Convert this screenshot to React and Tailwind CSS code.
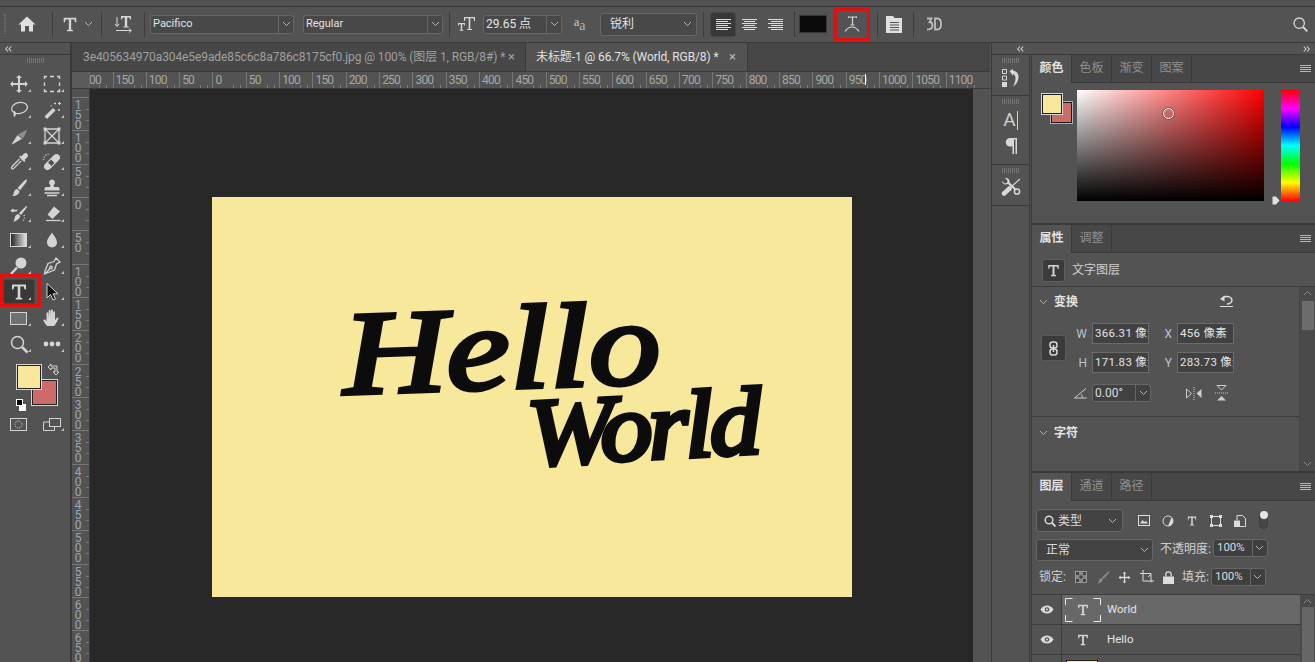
import React from "react";

// Small chevron used by every dropdown in the panels
const Chevron = ({ className = "" }) => (
  <svg width="9" height="6" viewBox="0 0 9 6" className={className}>
    <path d="M1 1l3.500 3.500L8 1" fill="none" stroke="#b4b4b4" strokeWidth="1" />
  </svg>
);

const Burger = () => (
  <svg width="11" height="8" viewBox="0 0 11 8">
    <path d="M0 .5h11M0 2.500h11M0 4.500h11M0 6.500h11" stroke="#b8b8b8" strokeWidth="1" />
  </svg>
);

const Grip = () => (
  <div className="flex h-[5px] justify-center gap-[1px]">
    {Array.from({ length: 9 }).map((_, i) => (
      <span key={i} className="h-[5px] w-[1px] bg-[#757575]" />
    ))}
  </div>
);

const Collapse = ({ flip }) => (
  <svg width="7" height="6" viewBox="0 0 7 6" className={flip ? "rotate-180" : ""}>
    <path d="M3 .5L.7 3 3 5.500M6.300 .5L4 3l2.300 2.500" fill="none" stroke="#d0d0d0" strokeWidth="1.100" />
  </svg>
);

// Slab T, used for the type tool and the layer rows
const SlabT = ({ size = 18, color = "#d4d4d4" }) => (
  <svg width={size} height={size} viewBox="0 0 20 20">
    <path d="M3 2.500h14v5h-1.400l-.8-3h-3.500v11l2 .6v1.400H6.700v-1.400l2-.6v-11H5.200l-.8 3H3z" fill={color} />
  </svg>
);

const I = ({ children, size = 20, vb = 20 }) => (
  <svg width={size} height={size} viewBox={`0 0 ${vb} ${vb}`} fill="none" stroke="#d4d4d4" strokeWidth="1.300">
    {children}
  </svg>
);
const F = { fill: "#d4d4d4", stroke: "none" };

const tools = [
  [
    <I><path {...F} d="M10 1l3 3h-2v5h5V7l3 3-3 3v-2h-5v5h2l-3 3-3-3h2v-5H4v2l-3-3 3-3v2h5V4H7z" /></I>,
    <I><path d="M2.500 5V2.500H5M8 2.500h4M15 2.500h2.500V5M17.500 8.500v3.500M17.500 15v2.500H15M12 17.500H8M5 17.500H2.500V15M2.500 12V8.500" strokeWidth="1.400" /></I>,
  ],
  [
    <I><ellipse cx="10.500" cy="8" rx="8" ry="5.500" transform="rotate(-12 10.500 8)" /><path d="M5.500 13c-.5 1.500-1 3 .8 3.200M4.500 11.500c2 .5 2.500 2.500 1.500 3.500" /></I>,
    <I><path {...F} d="M11 8l2.500 2.500L5 19l-2.500-2.500z" /><path d="M13 2.500v2M12 3.500h2M17.500 2v3M16 3.500h3M17 9v2M16 10h2M9 5v1.500" strokeWidth="1" /></I>,
  ],
  [
    <I><path d="M18.500 3.500l-4.500 9-5-4z" fill="#8f8f8f" stroke="none" /><path {...F} d="M8.500 9l4.500 3.800-8 4.700-2.500 1z" /></I>,
    <I><path d="M3 3h14v14H3zM3 3l14 14M17 3L3 17" /><path {...F} d="M1.500 1.500h3v3h-3zM15.500 1.500h3v3h-3zM1.500 15.500h3v3h-3zM15.500 15.500h3v3h-3z" /></I>,
  ],
  [
    <I><path {...F} d="M15 1.500a2.500 2.500 0 013.500 3.500l-2.800 2.800.8.800-1.400 1.400-5-5 1.400-1.400.8.800z" /><path d="M10.500 7L3.500 14c-1.500 1.500-1.200 2-.8 2.500s1.200.8 2.500-.6l7-7" /></I>,
    <I><path {...F} d="M3 12l9-9c1.500-1.500 3.500-1.500 5 0s1.500 3.500 0 5l-9 9c-1.500 1.500-3.500 1.500-5 0s-1.500-3.500 0-5zM9 7.500L6 10.500l3.500 3.500 3-3z" /><circle cx="9.700" cy="10.200" r="1.100" fill="#4f4f4f" stroke="none" /><path d="M1.500 8a6 6 0 015-6" strokeDasharray="1 1.500" /></I>,
  ],
  [
    <I><path {...F} d="M17.500 1.500c.8.500.3 2-1 3.800L11 12.200 8.500 10l6-6.500c1.300-1.300 2.500-2.300 3-2zM8 11l2.500 2.200c-.3 2.800-3.500 5-7.500 4.800 1.800-1 1.500-2.500 2-4 .4-1.400 1.500-2.800 3-3z" /></I>,
    <I><path {...F} d="M10 1.500a3 3 0 012 5.200c-.5.500-.6 1.300 0 2.300h3.500c1.500 0 2 .8 2 2v1.500h-15V11c0-1.200.5-2 2-2H8c.6-1 .5-1.800 0-2.300a3 3 0 012-5.200z" /><path d="M2.500 15h15M5 17.500h10" /></I>,
  ],
  [
    <I><path {...F} d="M18 2c.4.300-.3 1.800-1.500 3.300L12 11 9.800 9.200l5-5c1.300-1.200 2.700-2.500 3.200-2.200zM9 10l2.300 1.800c-.3 2.800-3.500 5.200-7.300 6.200 1.500-1.500 1.200-3 1.700-4.500.5-1.500 1.800-3.200 3.300-3.500z" /><path {...F} d="M1 6.500l3.500-2v1.300h4.500l-1.500 1.700h-3v1.300z" /><path d="M15 11c1 2 .5 4-1 6" strokeDasharray="1 1.500" /></I>,
    <I><path {...F} d="M12 2.500l6 5-7.500 7.500-5-4.500z" /><path d="M4 16.500h14.500" /></I>,
  ],
  [
    <svg width="17" height="14" viewBox="0 0 17 14"><rect x=".5" y=".5" width="16" height="13" fill="url(#g1)" stroke="#d4d4d4" /><defs><linearGradient id="g1"><stop offset="0" stopColor="#222" /><stop offset="1" stopColor="#e8e8e8" /></linearGradient></defs></svg>,
    <I><path {...F} d="M10 2.500c2.500 4 5 6.500 5 10a5 5 0 01-10 0c0-3.500 2.500-6 5-10z" /></I>,
  ],
  [
    <I><circle {...F} cx="12" cy="7" r="5.500" /><path d="M8 11.500l-6 6.500" strokeWidth="2.400" /></I>,
    <I><path d="M14 2l4 4-3.500 2-2 6L5 17l-2.500 1L3 15l3-7.500 6-2zM3 18l5.500-6" /><circle cx="9" cy="11.500" r="1.300" /></I>,
  ],
  [
    "T",
    <svg width="14" height="20" viewBox="0 0 14 20"><path d="M2 1.500v14.500l3.500-3.500 2.500 5.500 2.500-1-2.500-5.200H13z" fill="#111" stroke="#d4d4d4" strokeWidth="1" /></svg>,
  ],
  [
    <svg width="17" height="13" viewBox="0 0 17 13"><rect x=".5" y=".5" width="16" height="12" fill="#717171" stroke="#d4d4d4" /></svg>,
    <I><path {...F} d="M5 18c-1.500-2-4-5-3.500-6 .5-1 1.800-.5 3 1V5c0-1 1.600-1 1.800 0l.4 4.500V3c0-1.200 1.800-1.200 1.900 0l.3 6V2.500c0-1.200 1.900-1.200 2 0l.2 7V4.200c0-1.200 1.800-1.200 1.900 0v8c1-1.600 2-3 3-2.700.9.300.7 1-.2 2.500-1 1.800-2 4.500-3.800 6z" /></I>,
  ],
  [
    <I><circle cx="8.500" cy="8.500" r="6" strokeWidth="1.500" /><path d="M13 13l5.500 5.500" strokeWidth="2.500" /></I>,
    <svg width="18" height="6" viewBox="0 0 18 6"><circle cx="3" cy="3" r="2.400" fill="#d4d4d4" /><circle cx="9" cy="3" r="2.400" fill="#d4d4d4" /><circle cx="15" cy="3" r="2.400" fill="#d4d4d4" /></svg>,
  ],
];

const ToolCell = ({ icon, active }) => (
  <div className="relative flex h-[26px] w-[33px] items-center justify-center">
    {active && <span className="absolute left-[1px] top-0 h-[25px] w-[32px] rounded-[3px] border border-[#484848] bg-[#383838]" />}
    <span className="relative flex">{active ? <SlabT size={20} /> : icon}</span>
    <span className="absolute left-[26px] top-[18px] h-0 w-0 border-b-[3px] border-l-[3px] border-b-[#c0c0c0] border-l-transparent" />
  </div>
);

const Toolbar = () => (
  <div className="flex w-[70px] shrink-0 flex-col bg-[#535353]">
    <div className="flex h-[12px] items-center border-b border-[#3a3a3a] pl-[5px]">
      <Collapse />
    </div>
    <div className="pt-[3px]"><Grip /></div>
    <div className="relative flex flex-col pl-[2px] pt-[8px]">
      {tools.map((row, i) => (
        <div key={i} className="flex">
          <ToolCell icon={row[0]} active={row[0] === "T"} />
          <ToolCell icon={row[1]} />
        </div>
      ))}
      {/* red marker over the type tool */}
      <span className="absolute left-0 top-[211px] h-[33px] w-[41px] border-[3px] border-[#e40f0f]" />
    </div>
    <div className="relative mt-[8px] h-[46px]">
      <span className="absolute left-[32px] top-[15px] h-[25px] w-[25px] border border-[#222] bg-[#cd6a6a] outline outline-1 outline-[#d8d8d8]" />
      <span className="absolute left-[17px] top-[0px] h-[24px] w-[24px] border border-[#222] bg-[#f8e89c] outline outline-1 outline-[#d8d8d8]" />
      <svg width="13" height="13" viewBox="0 0 13 13" className="absolute left-[47px] top-[-2px]">
        <path d="M1 4l3-3v2h6v6h2l-3 3-3-3h2V5H4v2z" fill="none" stroke="#d4d4d4" strokeWidth="1" />
      </svg>
      <span className="absolute left-[19px] top-[39px] h-[7px] w-[7px] bg-white" />
      <span className="absolute left-[16px] top-[34px] h-[7px] w-[7px] border border-white bg-black" />
    </div>
    <div className="mt-[7px] flex pl-[2px]">
      <div className="flex w-[33px] justify-center">
        <svg width="17" height="13" viewBox="0 0 17 13">
          <rect x=".5" y=".5" width="16" height="12" fill="none" stroke="#d4d4d4" />
          <circle cx="8.500" cy="6.500" r="3.500" fill="none" stroke="#d4d4d4" strokeDasharray="1 1" />
        </svg>
      </div>
      <div className="relative flex w-[33px] justify-center">
        <svg width="18" height="13" viewBox="0 0 18 13">
          <rect x="6.500" y=".5" width="11" height="8" fill="none" stroke="#d4d4d4" />
          <path d="M6.500 4H.5v8.500h11V8.500" fill="none" stroke="#d4d4d4" />
        </svg>
        <span className="absolute left-[26px] top-[10px] h-0 w-0 border-b-[3px] border-l-[3px] border-b-[#c0c0c0] border-l-transparent" />
      </div>
    </div>
  </div>
);

const Sep = ({ className = "" }) => <span className={`h-[25px] w-[1px] shrink-0 bg-[#3c3c3c] ${className}`} />;

const Select = ({ label, w, chev = 15, className = "" }) => (
  <div style={{ width: w }} className={`flex h-[19px] shrink-0 items-center rounded-[3px] border border-[#666] bg-[#484848] text-[11px] text-[#e4e4e4] ${className}`}>
    <span className="flex-1 truncate pl-[2px]">{label}</span>
    <span style={{ width: chev }} className="flex h-full items-center justify-center border-l border-[#666]"><Chevron /></span>
  </div>
);

const AlignIcon = ({ rows }) => (
  <svg width="15" height="13" viewBox="0 0 15 13">
    {rows.map((r, i) => (
      <path key={i} d={`M${r[0]} ${i * 2 + 1.5}H${r[1]}`} stroke="#dcdcdc" strokeWidth="1" />
    ))}
  </svg>
);

const OptionsBar = () => (
  <div className="flex h-[36px] shrink-0 items-center border-b border-[#3a3a3a] bg-[#535353] pb-[1px]">
    <div className="flex h-full w-[18px] items-center pl-[4px]">
      <span className="h-[20px] w-[2px] border-x border-dotted border-[#6a6a6a]" />
    </div>
    <div className="flex w-[18px] justify-center">
      <svg width="18" height="16" viewBox="0 0 18 16">
        <path d="M9 .5l8.500 8h-2.500v7h-4V10H7v5.500H3v-7H.5z" fill="#e0e0e0" />
      </svg>
    </div>
    <Sep className="ml-[16px]" />
    <div className="ml-[8px] flex w-[18px] justify-center"><SlabT size={19} /></div>
    <Chevron className="ml-[5px]" />
    <Sep className="ml-[8px]" />
    <div className="ml-[12px] flex w-[19px]">
      <svg width="19" height="20" viewBox="0 0 19 20">
        <path d="M3 3v9M1 10l2 2.500L5 10" fill="none" stroke="#d8d8d8" />
        <path d="M7 2h10v3.500h-1l-.5-2h-2.300v9h1.500v1H9.300v-1h1.500v-9H8.500L8 5.500H7z" fill="#d8d8d8" />
        <path d="M2 16.500h15M15 14.500l2.300 2-2.300 2" fill="none" stroke="#d8d8d8" />
      </svg>
    </div>
    <Sep className="ml-[11px]" />
    <Select label="Pacifico" w={144} className="ml-[5px]" />
    <Select label="Regular" w={140} className="ml-[9px]" />
    <Sep className="ml-[6px]" />
    <div className="ml-[7px] flex w-[19px]">
      <svg width="19" height="16" viewBox="0 0 19 16">
        <path d="M1 7h7v2.500h-.7l-.4-1.300H5.200v5.500h1v1H2.800v-1h1V8.200H2.100l-.4 1.300H1z" fill="#d8d8d8" />
        <path d="M7 1h11v4h-.9l-.6-2.700h-3.200v10.700h1.700v1h-5v-1h1.700V2.300H8.500L7.900 5H7z" fill="#d8d8d8" />
      </svg>
    </div>
    <Select label={<span className="text-[12px]">29.65 点</span>} w={79} chev={15} className="ml-[7px]" />
    <span className="ml-[12px] flex w-[15px] items-end text-[#cfcfcf] [font-family:'Liberation_Serif',serif]">
      <span className="mt-[-4px] text-[12px] leading-[12px]">a</span>
      <span className="mb-[-4px] text-[14px] leading-[12px] text-[#b4b4b4]">a</span>
    </span>
    <div className="ml-[11px] flex h-[23px] w-[97px] shrink-0 items-center rounded-[3px] border border-[#666] bg-[#484848] pl-[9px] pr-[4px] text-[12px] text-[#e4e4e4]">
      <span className="flex-1">锐利</span>
      <Chevron />
    </div>
    <Sep className="ml-[6px]" />
    <div className="ml-[6px] flex h-[25px] w-[26px] items-center justify-center rounded-[3px] border border-[#484848] bg-[#383838]">
      <AlignIcon rows={[[0, 15], [0, 12], [0, 15], [0, 12], [0, 15], [0, 12]]} />
    </div>
    <div className="ml-[6px] flex w-[15px]"><AlignIcon rows={[[0, 15], [2, 13], [0, 15], [2, 13], [0, 15], [2, 13]]} /></div>
    <div className="ml-[11px] flex w-[15px]"><AlignIcon rows={[[0, 15], [3, 15], [0, 15], [3, 15], [0, 15], [3, 15]]} /></div>
    <Sep className="ml-[11px]" />
    <span className="ml-[4px] h-[18px] w-[28px] border border-[#383838] bg-[#0a0a0a]" />
    <div className="ml-[7px] flex h-[33px] w-[36px] items-center justify-center border-[3px] border-[#df1010]">
      <svg width="16" height="18" viewBox="0 0 16 18">
        <path d="M4.500 3V2h8v1M8.500 2v8M6.500 10h4" fill="none" stroke="#d8d8d8" strokeWidth="1.200" />
        <path d="M1 16.500c2-3 4.500-4.500 7-4.500s5 1.500 7 4.500" fill="none" stroke="#d8d8d8" strokeWidth="1.100" />
      </svg>
    </div>
    <Sep className="ml-[7px]" />
    <div className="ml-[8px] flex w-[16px]">
      <svg width="16" height="17" viewBox="0 0 16 17">
        <path d="M0 0h7l1.500 2H16v15H0z" fill="#e0e0e0" />
        <path d="M4 6.500h9M4 9h9M4 11.500h9M4 14h9" stroke="#535353" />
      </svg>
    </div>
    <Sep className="ml-[11px]" />
    <div className="ml-[12px] flex w-[16px]">
      <svg width="16" height="14" viewBox="0 0 16 14">
        <path d="M1 1.500h4.500l-2 3.500c2 0 3 1 3 3.500S5 12.500 1 12.500" fill="none" stroke="#bcbcbc" strokeWidth="1.800" />
        <path d="M9 1.500h2.500C14 1.500 15 3.500 15 7s-1 5.500-3.500 5.500H9z" fill="none" stroke="#bcbcbc" strokeWidth="1.800" />
      </svg>
    </div>
    <div className="ml-auto mr-[7px] flex">
      <svg width="15" height="15" viewBox="0 0 15 15">
        <circle cx="6.200" cy="6.200" r="5.200" fill="none" stroke="#d8d8d8" strokeWidth="1.300" />
        <path d="M10 10l4.300 4.300" stroke="#d8d8d8" strokeWidth="1.800" />
      </svg>
    </div>
  </div>
);

const hLabels = ["150","100","50","0","50","100","150","200","250","300","350","400","450","500","550","600","650","700","750","800","850","900","950","1000","1050","1100"];
const vLabels = ["150","100","50","0","50","100","150","200","250","300","350","400","450","500","550","600","650"];

const Tick = ({ className }) => <span className={`absolute bg-[#7d7d7d] ${className}`} />;

const HRuler = () => (
  <div className="relative flex h-[17px] shrink-0 overflow-hidden border-b border-[#3a3a3a] text-[12px] leading-[16px] tracking-[-0.8px] text-[#a6a6a6]">
    <div className="relative h-full w-[18px] shrink-0 border-r border-dotted border-[#6f6f6f] bg-[#5b5b5b]" />
    <div className="relative h-full w-[22.5px] shrink-0 overflow-hidden">
      <span className="absolute left-[-1px]">00</span>
      <Tick className="bottom-0 left-[9px] h-[3px] w-[1px]" />
      <Tick className="bottom-0 left-[16px] h-[3px] w-[1px]" />
    </div>
    {hLabels.map((l, i) => (
      <div key={i} className="relative h-full w-[33.33px] shrink-0 border-l border-[#777] pl-[2px]">
        {l}
        <Tick className="bottom-0 left-[20px] h-[3px] w-[1px]" />
        <Tick className="bottom-0 left-[27px] h-[3px] w-[1px]" />
      </div>
    ))}
    <span className="absolute left-[793px] top-[2px] h-[11px] w-[1px] bg-white" />
  </div>
);

// Digits stand one under the other, as one upright vertical text
const VCell = ({ label }) => (
  <div className="relative h-[33.33px] shrink-0 overflow-hidden border-t border-[#777] pl-[1px]">
    <span className="block text-[12px] leading-[10px] tracking-[-4px] text-[#9aa4b4] [text-orientation:upright] [writing-mode:vertical-lr]">{label}</span>
    <Tick className="right-0 top-[11px] h-[1px] w-[3px]" />
    <Tick className="right-0 top-[22px] h-[1px] w-[3px]" />
  </div>
);

const VRuler = () => (
  <div className="flex w-[18px] shrink-0 flex-col overflow-hidden border-r border-[#3a3a3a]">
    <div className="h-[8px] shrink-0 pl-[2px]" />
    {vLabels.map((l, i) => <VCell key={i} label={l} />)}
  </div>
);

const scriptText = "absolute origin-left italic text-[#0c0c0c] [-webkit-text-stroke:5px_#0c0c0c] [font-family:'Liberation_Serif',serif]";

const Doc = () => (
  <div className="relative ml-[122px] mt-[108px] h-[400px] w-[640px] shrink-0 overflow-hidden bg-[#f8e89c]">
    <span className={`${scriptText} left-[131px] top-[87px] [transform:rotate(-2deg)_scale(1.02,0.85)] text-[140px] leading-[140px]`}>Hello</span>
    <span className={`${scriptText} left-[315px] top-[184px] [transform:rotate(-3deg)_scale(1,0.92)] text-[104px] leading-[104px] tracking-[-4px]`}>World</span>
  </div>
);

const Center = () => (
  <div className="box-content flex w-[918px] shrink-0 flex-col border-l-2 border-[#3a3a3a]">
    <div className="flex h-[29px] shrink-0 items-center border-b border-[#3a3a3a] bg-[#474747] text-[12px] tracking-[-0.1px] whitespace-nowrap text-[#a0a0a0]">
      <div className="flex h-full w-[454px] items-center border-r border-[#3a3a3a] pl-[11px]">
        <span className="w-[421px]">3e405634970a304e5e9ade85c6c8a786c8175cf0.jpg @ 100% (图层 1, RGB/8#) *</span>
        <span className="ml-[4px] text-[13px]">×</span>
      </div>
      <div className="flex h-full w-[222px] items-center border-r border-[#3a3a3a] bg-[#535353] pl-[10px] text-[#e2e2e2]">
        <span className="w-[190px]">未标题-1 @ 66.7% (World, RGB/8) *</span>
        <span className="ml-[3px] text-[13px] text-[#bbb]">×</span>
      </div>
    </div>
    <HRuler />
    <div className="flex min-h-0 flex-1">
      <VRuler />
      <div className="flex w-[883px] shrink-0 overflow-hidden bg-[#282828]"><Doc /></div>
      <div className="flex-1 bg-[#535353]" />
    </div>
  </div>
);

const DockSect = ({ h, children }) => (
  <div style={{ height: h }} className="flex shrink-0 flex-col items-center border-b border-[#3a3a3a] pt-[3px]">
    <Grip />
    {children}
  </div>
);

const Dock = () => (
  <div className="flex w-[38px] shrink-0 flex-col border-r border-[#3a3a3a]">
    <DockSect h={41}>
      <svg width="17" height="18" viewBox="0 0 17 18" className="mt-[6px]">
        <path d="M.5 .5h4v4h-4zM.5 7h4v4h-4z" fill="none" stroke="#d8d8d8" />
        <path d="M0 13h5v5H0z" fill="#d8d8d8" />
        <path d="M7.500 2L11 0v1.800c3.500.3 5.500 2.700 5.500 6 0 4-2 7.500-5.500 9.700 1.500-2.700 2.500-5.500 2.500-8.500 0-2-1-3.500-2.500-4V7z" fill="#d8d8d8" />
      </svg>
    </DockSect>
    <DockSect h={69}>
      <div className="mt-[6px] flex h-[20px] items-end text-[19px] leading-[20px] text-[#d0d0d0]">A<span className="ml-[1px] h-[19px] w-[1px] bg-[#d0d0d0]" /></div>
      <svg width="12" height="16" viewBox="0 0 12 16" className="mt-[8px]">
        <path d="M5 0h7v16h-1.500V1.500H9V16H7.500V8.500H5A4.200 4.200 0 015 0z" fill="#d8d8d8" />
      </svg>
    </DockSect>
    <DockSect h={41}>
      <svg width="20" height="18" viewBox="0 0 20 18" className="mt-[5px]">
        <path d="M1 3L3.500 5.500 6 5l.5-2.500L4 0C7 -.5 9 1.500 8.500 4.500L16 11.500l-1.500 1.500L7 6C4 7 1 6 1 3z" fill="#d8d8d8" />
        <circle cx="16" cy="13.500" r="2.600" fill="#535353" stroke="#d8d8d8" strokeWidth="1.500" />
        <path d="M19 1l-9 8" stroke="#d8d8d8" strokeWidth="1.200" />
        <path d="M8.500 10.500L3 15.500" stroke="#d8d8d8" strokeWidth="4.500" strokeLinecap="round" />
      </svg>
    </DockSect>
  </div>
);

const Tabs = ({ items }) => (
  <div className="flex h-[28px] shrink-0 items-stretch border-b border-[#3a3a3a] bg-[#474747] text-[12px] text-[#8f8f8f]">
    {items.map((t, i) => (
      <div key={t} className={`flex w-[40px] items-center justify-center border-r border-[#3a3a3a] pb-[2px] ${i === 0 ? "mb-[-1px] bg-[#535353] font-semibold text-[#e2e2e2]" : ""}`}>{t}</div>
    ))}
    <div className="ml-auto flex items-center pr-[4px]"><Burger /></div>
  </div>
);

const ColorPanel = () => (
  <div className="flex h-[170px] shrink-0 flex-col border-b-2 border-[#3a3a3a]">
    <Tabs items={["颜色", "色板", "渐变", "图案"]} />
    <div className="relative flex pl-[45px] pt-[7px]">
      <div className="relative h-[111px] w-[187px] bg-[linear-gradient(to_top,#000,transparent),linear-gradient(to_right,#fff,#f00)]">
        <span className="absolute left-[86px] top-[18px] h-[11px] w-[11px] rounded-full border border-white outline outline-1 outline-[#33333366]" />
      </div>
      <div className="ml-[17px] h-[111px] w-[19px] bg-[linear-gradient(to_bottom,#f00,#f0f,#00f,#0ff,#0f0,#ff0,#f00)]" />
      <span className="absolute left-[19px] top-[19px] h-[21px] w-[21px] border border-[#1c1c1c] bg-[#cd6a6a] outline outline-1 outline-[#b0b0b0]" />
      <span className="absolute left-[10px] top-[11px] h-[20px] w-[20px] border border-[#1c1c1c] bg-[#f8e89c] outline outline-1 outline-[#d8d8d8]" />
      <svg width="8" height="9" viewBox="0 0 8 9" className="absolute left-[240px] top-[113px]">
        <path d="M.5.500h3.500l3.500 4-3.500 4H.5z" fill="#e0e0e0" />
      </svg>
    </div>
  </div>
);

const Field = ({ label, value }) => (
  <div className="flex items-center">
    <span className="w-[15px] text-right text-[12px] text-[#b6c4d8]">{label}</span>
    <span className="ml-[5px] flex h-[21px] w-[57px] items-center overflow-hidden border border-[#6b6b6b] bg-[#414141] pl-[2px] text-[11.500px] tracking-[0.3px] whitespace-nowrap text-[#e4e4e4]">{value}</span>
  </div>
);

const PropsPanel = () => (
  <div className="flex h-[248px] shrink-0 flex-col border-b-2 border-[#3a3a3a] text-[#dcdcdc]">
    <Tabs items={["属性", "调整"]} />
    <div className="flex h-[34px] shrink-0 items-center border-b border-[#3c3c3c] pl-[10px] pt-[1px]">
      <div className="flex h-[23px] w-[23px] items-center justify-center rounded-[3px] border border-[#5f5f5f] bg-[#3a3a3a]"><SlabT size={15} /></div>
      <span className="ml-[7px] text-[12px] text-[#cfcfcf]">文字图层</span>
    </div>
    <div className="flex min-h-0 flex-1">
      <div className="flex flex-1 flex-col border-r border-[#454545]">
        <div className="flex h-[130px] shrink-0 flex-col border-b border-[#3c3c3c]">
          <div className="relative flex h-[28px] shrink-0 items-center pl-[7px] pt-[2px]">
            <Chevron />
            <span className="ml-[6px] text-[12px] font-bold text-[#e4e4e4]">变换</span>
            <svg width="14" height="14" viewBox="0 0 14 14" className="absolute left-[188px] top-[7px]">
              <path d="M2 5.500a5 3.800 0 1 1 5 4.500" fill="none" stroke="#dcdcdc" strokeWidth="1.500" />
              <path d="M0 5l4.500-3.500v6z" fill="#dcdcdc" />
              <path d="M0 12.500h13" stroke="#dcdcdc" />
            </svg>
          </div>
          <div className="flex items-center pl-[9px] pt-[8px]">
            <div className="flex h-[26px] w-[25px] items-center justify-center rounded-[3px] border border-[#5a5a5a] bg-[#3a3a3a]">
              <svg width="9" height="15" viewBox="0 0 9 15">
                <rect x="1" y="1" width="7" height="6" rx="2.500" fill="none" stroke="#d8d8d8" strokeWidth="1.500" />
                <rect x="1" y="8" width="7" height="6" rx="2.500" fill="none" stroke="#d8d8d8" strokeWidth="1.500" />
                <path d="M4.500 4v7" stroke="#d8d8d8" strokeWidth="1.500" />
              </svg>
            </div>
            <div className="ml-[6px] flex flex-col gap-[8px]">
              <div className="flex gap-[8px]">
                <Field label="W" value="366.31 像素" />
                <Field label="X" value="456 像素" />
              </div>
              <div className="flex gap-[8px]">
                <Field label="H" value="171.83 像素" />
                <Field label="Y" value="283.73 像素" />
              </div>
            </div>
          </div>
          <div className="flex items-center pl-[42px] pt-[11px]">
            <svg width="13" height="11" viewBox="0 0 13 11">
              <path d="M12 .5L.5 10h12M7 6c1 .8 1.200 2 1.200 4" fill="none" stroke="#cfcfcf" />
            </svg>
            <div className="ml-[5px] flex h-[18px] w-[59px] items-center rounded-[3px] border border-[#666] bg-[#414141] text-[12px] text-[#dcdcdc]">
              <span className="flex-1 pl-[2px]">0.00°</span>
              <span className="flex h-full w-[15px] items-center justify-center border-l border-[#666]"><Chevron /></span>
            </div>
            <svg width="16" height="13" viewBox="0 0 16 13" className="ml-[35px]">
              <path d="M.5 2L5.500 6.500.5 11z" fill="none" stroke="#cfcfcf" />
              <path d="M15.500 2l-5 4.500 5 4.500z" fill="#cfcfcf" />
              <path d="M8 0v13" stroke="#cfcfcf" strokeDasharray="1 1" />
            </svg>
            <svg width="13" height="16" viewBox="0 0 13 16" className="ml-[13px]">
              <path d="M2 .5h9L6.500 5z" fill="none" stroke="#cfcfcf" />
              <path d="M2 15.500h9L6.500 11z" fill="#cfcfcf" />
              <path d="M0 8h13" stroke="#cfcfcf" strokeDasharray="1 1" />
            </svg>
          </div>
        </div>
        <div className="flex items-center pl-[7px] pt-[7px]">
          <Chevron />
          <span className="ml-[6px] text-[12px] font-bold text-[#e4e4e4]">字符</span>
        </div>
      </div>
      <div className="flex w-[15px] shrink-0 flex-col items-center bg-[#4a4a4a] pt-[3px]">
        <Chevron className="rotate-180 opacity-60" />
        <span className="mt-[5px] h-[29px] w-[12px] bg-[#6c6c6c]" />
        <Chevron className="mt-auto mb-[4px] opacity-60" />
      </div>
    </div>
  </div>
);

const LayerRow = ({ name, selected }) => (
  <div className="flex h-[30px] shrink-0 border-b border-[#3c3c3c]">
    <div className="flex w-[30px] shrink-0 items-center justify-center border-r border-[#3c3c3c]">
      <svg width="14" height="9" viewBox="0 0 14 9">
        <path d="M.5 4.500C2.500 1.500 4.500.5 7 .5s4.500 1 6.500 4C11.500 7.500 9.500 8.500 7 8.500s-4.500-1-6.500-4z" fill="#dcdcdc" />
        <circle cx="7" cy="4.500" r="2.300" fill="#535353" />
        <circle cx="7" cy="4.500" r="1" fill="#dcdcdc" />
      </svg>
    </div>
    <div className={`flex flex-1 items-center ${selected ? "bg-[#686868]" : ""}`}>
      <div className="relative ml-[3px] flex h-[24px] w-[36px] items-center justify-center">
        {selected && (
          <svg width="36" height="24" viewBox="0 0 36 24" className="absolute left-0 top-0">
            <path d="M.5 7V.5h7M28.500.5h7V7M35.500 17v6.500h-7M7.500 23.500h-7V17" fill="none" stroke="#ececec" />
          </svg>
        )}
        <SlabT size={14} />
      </div>
      <span className="ml-[6px] text-[11.500px] text-[#e4e4e4]">{name}</span>
    </div>
  </div>
);

const LayersPanel = () => (
  <div className="flex min-h-0 flex-1 flex-col text-[#dcdcdc]">
    <Tabs items={["图层", "通道", "路径"]} />
    <div className="relative flex h-[31px] shrink-0 items-end pl-[4px]">
      <div className="flex h-[23px] w-[87px] items-center rounded-[3px] border border-[#666] bg-[#434343] pl-[7px] pr-[5px] text-[12px]">
        <svg width="12" height="12" viewBox="0 0 12 12">
          <circle cx="5" cy="5" r="3.800" fill="none" stroke="#dcdcdc" strokeWidth="1.400" />
          <path d="M8 8l3.500 3.500" stroke="#dcdcdc" strokeWidth="1.800" />
        </svg>
        <span className="ml-[2px] flex-1">类型</span>
        <Chevron />
      </div>
      <div className="ml-[15px] flex h-[23px] items-center gap-[12px]">
        <svg width="12" height="11" viewBox="0 0 12 11"><rect x=".5" y=".5" width="11" height="10" fill="none" stroke="#dcdcdc" /><path d="M2 8.500L4.500 5l2 2 1.500-1 2 2.500z" fill="#dcdcdc" /></svg>
        <svg width="12" height="12" viewBox="0 0 12 12"><circle cx="6" cy="6" r="5" fill="none" stroke="#dcdcdc" /><path d="M6 11A5 5 0 0 0 9.500 2.500z" fill="#dcdcdc" /></svg>
        <SlabT size={12} />
        <svg width="12" height="12" viewBox="0 0 12 12"><rect x="1.500" y="1.500" width="9" height="9" fill="none" stroke="#dcdcdc" /><path d="M0 0h3v3H0zM9 0h3v3H9zM0 9h3v3H0zM9 9h3v3H9z" fill="#dcdcdc" /></svg>
        <svg width="12" height="12" viewBox="0 0 12 12"><path d="M3 5V.5h5.500l3 3V11.500H6" fill="none" stroke="#dcdcdc" /><path d="M0 5.500h6v6.500H0z" fill="#dcdcdc" /></svg>
        <span className="relative ml-[1px] h-[17px] w-[9px] rounded-[5px] border border-[#3d3d3d] bg-[#474747]">
          <span className="absolute left-[0px] top-[-2px] h-[8px] w-[8px] rounded-full bg-[#e4e4e4]" />
        </span>
      </div>
    </div>
    <div className="mt-[7px] flex h-[22px] shrink-0 items-start pl-[4px] text-[12px]">
      <div className="flex h-[22px] w-[117px] items-center rounded-[3px] border border-[#666] bg-[#434343] pl-[9px] pr-[3px]">
        <span className="flex-1">正常</span>
        <Chevron />
      </div>
      <span className="ml-[7px] mt-[1px] text-[#cfcfcf]">不透明度:</span>
      <div className="ml-[2px] flex h-[18px] w-[55px] items-center rounded-[3px] border border-[#666] bg-[#3f3f3f] pl-[3px] text-[11.500px]">
        <span className="flex-1">100%</span>
        <span className="flex h-full w-[15px] items-center justify-center border-l border-[#666]"><Chevron /></span>
      </div>
    </div>
    <div className="mt-[4px] flex h-[24px] shrink-0 items-center pl-[7px] text-[12px] text-[#cfcfcf]">
      <span className="w-[35px]">锁定:</span>
      <svg width="12" height="12" viewBox="0 0 12 12" className="ml-[1px]">
        <rect x=".5" y=".5" width="11" height="11" fill="#888" stroke="#999" />
        <path d="M1 1h3v3H1zM8 1h3v3H8zM4.500 4.500h3v3h-3zM1 8h3v3H1zM8 8h3v3H8z" fill="#444" />
      </svg>
      <svg width="13" height="13" viewBox="0 0 13 13" className="ml-[10px]"><path d="M12 .5c.6.500 0 1.500-1 2.700L6.500 8 5 6.500l4.700-4.300C11 1 11.500 0 12 .5zM4.500 7L6 8.500C5.500 10.500 3 12.500.5 12.500c1.500-1 1-2 1.500-3.200C2.500 8 3.500 7 4.500 7z" fill="#8a8a8a" /></svg>
      <svg width="13" height="13" viewBox="0 0 20 20" className="ml-[8px]"><path d="M10 1l3 3h-2v5h5V7l3 3-3 3v-2h-5v5h2l-3 3-3-3h2v-5H4v2l-3-3 3-3v2h5V4H7z" fill="#dcdcdc" /></svg>
      <svg width="14" height="14" viewBox="0 0 14 14" className="ml-[9px]"><path d="M0 3.500h11v9M3 0v11h11" fill="none" stroke="#dcdcdc" /><path d="M8 7l3-3" stroke="#dcdcdc" /></svg>
      <svg width="11" height="13" viewBox="0 0 11 13" className="ml-[9px]"><path d="M0 5.500h11V13H0z" fill="#dcdcdc" /><path d="M2.800 5.500V3.500a2.700 2.700 0 015.400 0v2" fill="none" stroke="#dcdcdc" strokeWidth="1.300" /></svg>
      <span className="ml-[8px]">填充:</span>
      <div className="ml-[2px] flex h-[18px] w-[55px] items-center rounded-[3px] border border-[#666] bg-[#3f3f3f] pl-[3px] text-[11.500px] text-[#dcdcdc]">
        <span className="flex-1">100%</span>
        <span className="flex h-full w-[15px] items-center justify-center border-l border-[#666]"><Chevron /></span>
      </div>
    </div>
    <div className="mt-[5px] flex min-h-0 flex-1 border-t border-[#3c3c3c]">
      <div className="flex flex-1 flex-col overflow-hidden">
        <LayerRow name="World" selected />
        <LayerRow name="Hello" />
        <div className="flex h-[30px] shrink-0">
          <div className="w-[30px] shrink-0 border-r border-[#3c3c3c]" />
          <span className="ml-[4px] mt-[5px] h-[24px] w-[32px] border border-[#222] bg-[#f8e89c]" />
        </div>
      </div>
      <div className="flex w-[15px] shrink-0 flex-col items-center bg-[#4a4a4a] pt-[3px]">
        <Chevron className="rotate-180 opacity-60" />
        <span className="mt-[3px] w-[12px] flex-1 bg-[#666]" />
      </div>
    </div>
  </div>
);

export default function App() {
  return (
    <div className="flex h-[662px] w-[1315px] flex-col overflow-hidden bg-[#535353] text-[#dcdcdc] [font-family:'Roboto','Noto_Sans_CJK_SC',sans-serif]">
      <div className="h-[7px] shrink-0 border-b border-[#3a3a3a]" />
      <OptionsBar />
      <div className="flex min-h-0 flex-1">
        <Toolbar />
        <Center />
        <div className="ml-[1px] flex min-w-0 flex-1 flex-col border-l border-[#3a3a3a]">
          <div className="flex h-[12px] shrink-0 items-center justify-between border-b border-[#3a3a3a] pl-[25px] pr-[5px]">
            <Collapse />
            <Collapse flip />
          </div>
          <div className="flex min-h-0 flex-1">
            <Dock />
            <div className="ml-[1px] flex min-w-0 flex-1 flex-col border-l border-[#3a3a3a]">
              <ColorPanel />
              <PropsPanel />
              <LayersPanel />
            </div>
          </div>
        </div>
      </div>
    </div>
  );
}
